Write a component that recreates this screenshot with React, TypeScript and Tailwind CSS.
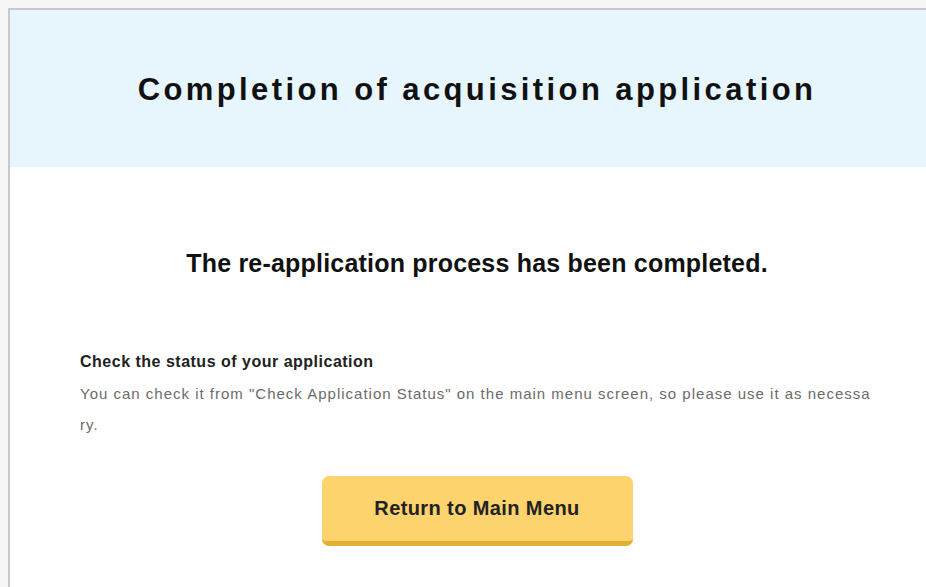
export default function App() {
  return (
    <div className="h-[587px] w-[926px] overflow-hidden bg-[#f6f6f6] pl-2 pt-2 font-['Liberation_Sans',Arial,sans-serif]">
      <div className="w-[936px] min-h-[600px] border-l-2 border-t-2 border-[#c9c9c9] bg-white">
        {/* Page title band */}
        <div className="flex h-[157px] items-center justify-center bg-[#e7f5fd] pt-[4px]">
          <h1 className="text-[31px] font-bold tracking-[3.4px] text-[#111]">
            Completion of acquisition application
          </h1>
        </div>

        <div className="px-[70px]">
          <p className="mt-[78px] text-center text-[25px] font-bold tracking-[0.2px] text-[#111]">
            The re-application process has been completed.
          </p>

          {/* Status note */}
          <div className="mt-[67px]">
            <h2 className="text-[16px] font-bold tracking-[0.5px] text-[#222]">
              Check the status of your application
            </h2>
            <p className="mt-[4px] break-all text-[15px] leading-[31px] tracking-[1px] text-[#6b6b6b]">
              You can check it from "Check Application Status" on the main menu
              screen, so please use it as necessary.
            </p>
          </div>

          <div className="mt-[36px] flex justify-center">
            <button className="h-[70px] w-[311px] rounded-[7px] border-b-[5px] border-[#e5ae35] bg-[#fdd36e] text-[20px] font-bold tracking-[0.4px] text-[#222]">
              Return to Main Menu
            </button>
          </div>
        </div>
      </div>
    </div>
  );
}
